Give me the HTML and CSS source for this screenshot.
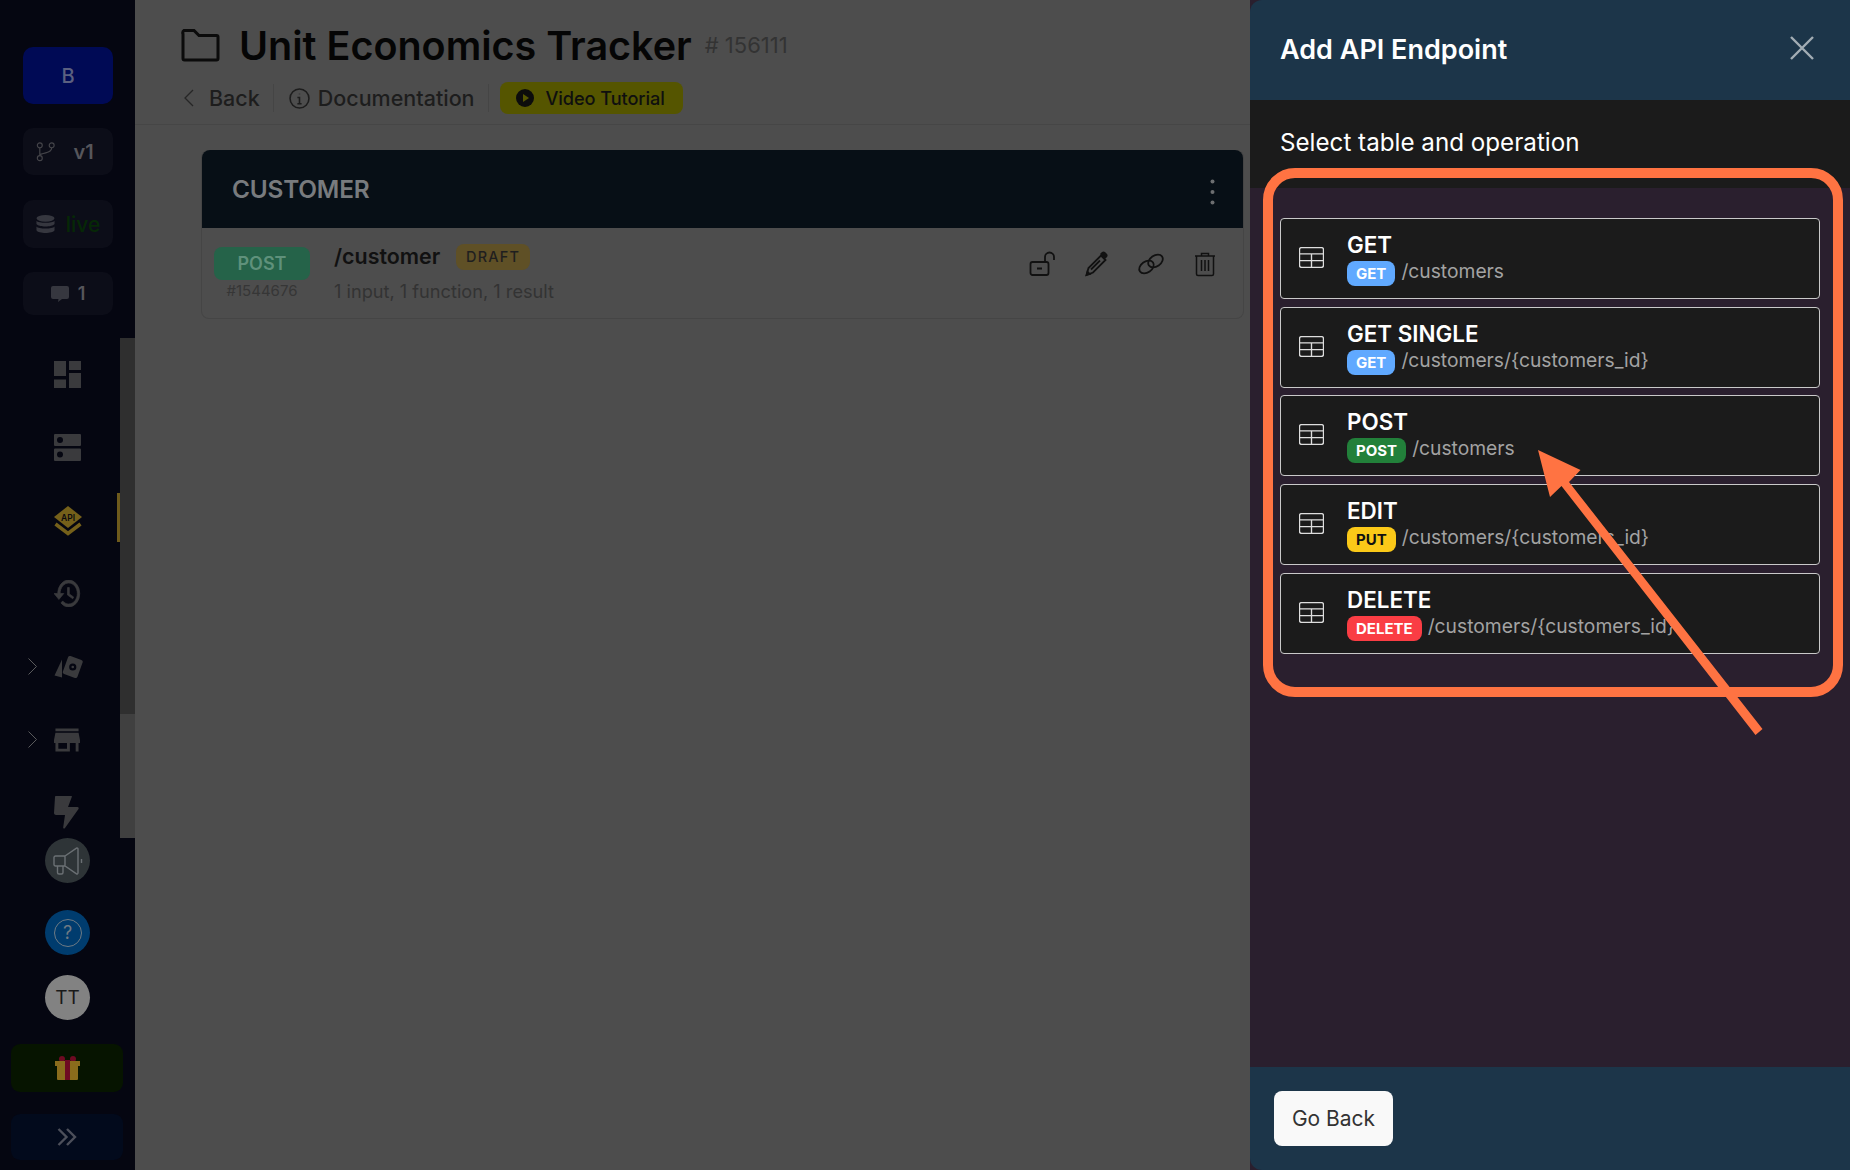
FILE: index.html
```html
<!DOCTYPE html>
<html lang="en">
<head>
<meta charset="utf-8">
<title>Unit Economics Tracker</title>
<link rel="stylesheet" href="styles.css">
</head>
<body>
<div class="app">
  <aside class="sidebar">
    <div class="top-stack">
      <div class="chip chip-brand">B</div>
      <div class="chip chip-branch">
        <svg class="ic-branch" viewBox="0 0 20 20"><circle cx="4" cy="3.500" r="2.600"/><circle cx="4" cy="17" r="2.600"/><circle cx="16.500" cy="3.500" r="2.600"/><path d="M4 6v8.500M16.500 6c0 4-4 5-12 7"/></svg>
        <span>v1</span>
      </div>
      <div class="chip chip-live">
        <svg class="ic-db" viewBox="0 0 20 20"><ellipse cx="10" cy="3.500" rx="9.500" ry="3.500"/><path d="M.5 6c2 3 17 3 19 0v3.500c-2 3.500-17 3.500-19 0zM.5 12c2 3 17 3 19 0v4c-2 3.800-17 3.800-19 0z"/></svg>
        <span>live</span>
      </div>
      <div class="chip chip-comment">
        <svg class="ic-comment" viewBox="0 0 18 16"><path d="M2 0h14a2 2 0 0 1 2 2v9a2 2 0 0 1-2 2H11l-4 3 .5-3H2a2 2 0 0 1-2-2V2a2 2 0 0 1 2-2z"/></svg>
        <span>1</span>
      </div>
    </div>
    <div class="nav-wrap">
      <nav class="nav">
        <div class="nav-row">
          <span></span>
          <svg class="nav-ic ic-27" viewBox="0 0 27 27"><path d="M0 0h12v15H0zM15 0h12v9H15zM0 18.500h12V27H0zM15 12h12v15H15z"/></svg>
        </div>
        <div class="nav-row">
          <span></span>
          <svg class="nav-ic ic-27" viewBox="0 0 27 27"><path fill-rule="evenodd" d="M1 0h25a1 1 0 0 1 1 1v10a1 1 0 0 1-1 1H1a1 1 0 0 1-1-1V1a1 1 0 0 1 1-1zm5 3a3 3 0 1 0 0 6 3 3 0 0 0 0-6zM1 14.500h25a1 1 0 0 1 1 1V26a1 1 0 0 1-1 1H1a1 1 0 0 1-1-1V15.500a1 1 0 0 1 1-1zm5 3a3 3 0 1 0 0 6 3 3 0 0 0 0-6z"/></svg>
        </div>
        <div class="nav-row nav-row-active">
          <span></span>
          <svg class="nav-ic ic-api" viewBox="0 0 28 30"><path class="gold" d="M14 0l14 11-14 11L0 11z"/><path class="gold-line" d="M1.500 18L14 27.500 26.500 18"/><text class="api-label" x="14" y="14.500" text-anchor="middle">API</text></svg>
          <i class="nav-marker"></i>
        </div>
        <div class="nav-row">
          <span></span>
          <svg class="nav-ic ic-27 ic-history" viewBox="1 3 22 18" preserveAspectRatio="none"><path d="M13 3a9 9 0 0 0-9 9H1l3.890 3.890.07.14L9 12H6c0-3.870 3.130-7 7-7s7 3.130 7 7-3.130 7-7 7c-1.930 0-3.680-.79-4.940-2.060l-1.420 1.420A8.954 8.954 0 0 0 13 21a9 9 0 0 0 0-18zm-1 5v5l4.280 2.540.72-1.210-3.500-2.080V8H12z"/></svg>
        </div>
        <div class="nav-row">
          <svg class="chev" viewBox="0 0 9 17"><path d="M.5.5l8 8-8 8"/></svg>
          <svg class="nav-ic ic-cards" viewBox="0 0 29 26"><rect x="11" y="3.500" width="15.500" height="19" rx="2" transform="rotate(20 18.750 13)"/><path d="M8 5.500L.5 21.500l7.500 2z"/><circle class="gear" cx="18.750" cy="13" r="3.600"/><circle cx="18.750" cy="13" r="1.300"/></svg>
        </div>
        <div class="nav-row">
          <svg class="chev" viewBox="0 0 9 17"><path d="M.5.5l8 8-8 8"/></svg>
          <svg class="nav-ic ic-store" viewBox="3 4 18 16"><path d="M20 4H4v2h16V4zm1 10v-2l-1-5H4l-1 5v2h1v6h10v-6h4v6h2v-6h1zm-9 4H6v-4h6v4z"/></svg>
        </div>
        <div class="nav-row">
          <span></span>
          <svg class="nav-ic ic-bolt" viewBox="0 0 25 33"><path d="M2 0h15c1 0 1 .5.8 1L14 11h9.500c1.200 0 1.500 1 1 2L11 32c-.8 1-2 .5-1.800-.8L11 19H2c-1 0-2-.8-2-2L1 1c0-.6.5-1 1-1z"/></svg>
        </div>
      </nav>
      <div class="scrollbar"><div class="scroll-thumb"></div></div>
    </div>
    <div class="bottom-stack">
      <div class="round round-news">
        <svg class="ic-mega" viewBox="0 0 30 28"><path d="M12 9L23.500 1.200A1 1 0 0 1 25 2v24a1 1 0 0 1-1.500.8L12 19H2.500A1.500 1.500 0 0 1 1 17.500v-7A1.500 1.500 0 0 1 2.500 9zM12 9v10M4.500 19v6.500A1.500 1.500 0 0 0 6 27h2.500a1.500 1.500 0 0 0 1.500-1.500V19M28.500 12v4"/></svg>
      </div>
      <div class="round round-help"><span class="help-ring">?</span></div>
      <div class="round round-user">TT</div>
      <div class="wide-btn wide-gift">
        <svg class="ic-gift" viewBox="0 0 25 24"><circle class="ribbon" cx="7" cy="3" r="3"/><circle class="ribbon" cx="18" cy="3" r="3"/><path class="box" d="M0 5h25v5H0zM2 10h21v13a1 1 0 0 1-1 1H3a1 1 0 0 1-1-1z"/><path class="ribbon" d="M10 4h5v20h-5z"/></svg>
      </div>
      <div class="wide-btn wide-expand">
        <svg class="ic-expand" viewBox="0 0 20 18"><path d="M1.500 1l8 8-8 8M10 1l8 8-8 8"/></svg>
      </div>
    </div>
  </aside>

  <main class="main">
    <header class="page-head">
      <div class="title-row">
        <svg class="ic-folder" viewBox="0 0 39 34"><path d="M2 6a3 3 0 0 1 1-3.500h10l5 5h17.500a1.500 1.500 0 0 1 1.500 1.500v21.500a1.500 1.500 0 0 1-1.500 1.500h-32A1.500 1.500 0 0 1 2 30.500z"/></svg>
        <h1 class="page-title">Unit Economics Tracker</h1>
        <span class="page-id"># 156111</span>
      </div>
      <div class="sub-row">
        <a class="sub-link sub-back">
          <svg class="ic-back" viewBox="0 0 10 18"><path d="M9 1L1 9l8 8"/></svg>
          Back
        </a>
        <i class="sub-divider"></i>
        <a class="sub-link sub-doc">
          <svg class="ic-info" viewBox="0 0 20 20"><circle cx="10" cy="10" r="9"/><path d="M8 9h2v6M8 15h4M10 5.500v.5"/></svg>
          Documentation
        </a>
        <i class="sub-divider"></i>
        <a class="video-btn">
          <svg class="ic-play" viewBox="0 0 18 18"><circle cx="9" cy="9" r="9"/><path class="play-tri" d="M7 5l6 4-6 4z"/></svg>
          Video Tutorial
        </a>
      </div>
    </header>
    <section class="content">
      <div class="card">
        <div class="card-head">
          <span class="card-title">CUSTOMER</span>
          <svg class="ic-dots" viewBox="0 0 5 26"><circle cx="2.500" cy="2.500" r="2"/><circle cx="2.500" cy="13" r="2"/><circle cx="2.500" cy="23.500" r="2"/></svg>
        </div>
        <div class="card-row">
          <div class="verb-col">
            <span class="verb-post">POST</span>
            <span class="verb-id">#1544676</span>
          </div>
          <div class="row-info">
            <div class="row-title"><span class="row-path">/customer</span><span class="draft">DRAFT</span></div>
            <div class="row-desc">1 input, 1 function, 1 result</div>
          </div>
          <div class="row-actions">
            <svg class="act" viewBox="0 0 28 28"><rect x="2.500" y="12" width="18" height="13" rx="2"/><path d="M9 18.500h5M17 12V7a4.500 4.500 0 0 1 9 0v3"/></svg>
            <svg class="act" viewBox="0 0 28 28"><path d="M4.500 25l2-7L19 5.500l4.500 4.500L11 22.500z"/><path class="act-fill" d="M18 4l2-2c1-.8 2-.8 3 0l2 2c.8 1 .8 2 0 3l-2 2zM3.500 26l1.500-6 4.500 4.500z"/><path d="M9 19.500l9-9"/></svg>
            <svg class="act" viewBox="0 0 28 28"><ellipse cx="9.500" cy="17" rx="8" ry="5.500" transform="rotate(-35 9.500 17)"/><ellipse cx="18.500" cy="11" rx="8" ry="5.500" transform="rotate(-35 18.500 11)"/></svg>
            <svg class="act act-thin" viewBox="0 0 28 28"><path d="M4 6h20M10.500 6V3.500h7V6M5.500 6v18a1.500 1.500 0 0 0 1.500 1.500h14a1.500 1.500 0 0 0 1.500-1.500V6M10.500 10v11M14 10v11M17.500 10v11"/></svg>
          </div>
        </div>
      </div>
    </section>
  </main>

  <aside class="panel">
    <header class="panel-head">
      <h2 class="panel-title">Add API Endpoint</h2>
      <svg class="ic-close" viewBox="0 0 24 24"><path d="M1 1l22 22M23 1L1 23"/></svg>
    </header>
    <div class="panel-intro">Select table and operation</div>
    <div class="panel-body">
      <div class="op-list">
        <div class="op">
          <svg class="ic-table" viewBox="0 0 24 20"><rect x=".5" y=".5" width="23" height="19" rx="2"/><path d="M.5 6.500h23M.5 13h23M12 6.500v13"/></svg>
          <div class="op-text"><div class="op-title">GET</div><div class="op-route"><span class="tag tag-get">GET</span><span class="op-path">/customers</span></div></div>
        </div>
        <div class="op">
          <svg class="ic-table" viewBox="0 0 24 20"><rect x=".5" y=".5" width="23" height="19" rx="2"/><path d="M.5 6.500h23M.5 13h23M12 6.500v13"/></svg>
          <div class="op-text"><div class="op-title">GET SINGLE</div><div class="op-route"><span class="tag tag-get">GET</span><span class="op-path">/customers/{customers_id}</span></div></div>
        </div>
        <div class="op">
          <svg class="ic-table" viewBox="0 0 24 20"><rect x=".5" y=".5" width="23" height="19" rx="2"/><path d="M.5 6.500h23M.5 13h23M12 6.500v13"/></svg>
          <div class="op-text"><div class="op-title">POST</div><div class="op-route"><span class="tag tag-post">POST</span><span class="op-path">/customers</span></div></div>
        </div>
        <div class="op">
          <svg class="ic-table" viewBox="0 0 24 20"><rect x=".5" y=".5" width="23" height="19" rx="2"/><path d="M.5 6.500h23M.5 13h23M12 6.500v13"/></svg>
          <div class="op-text"><div class="op-title">EDIT</div><div class="op-route"><span class="tag tag-put">PUT</span><span class="op-path">/customers/{customers_id}</span></div></div>
        </div>
        <div class="op">
          <svg class="ic-table" viewBox="0 0 24 20"><rect x=".5" y=".5" width="23" height="19" rx="2"/><path d="M.5 6.500h23M.5 13h23M12 6.500v13"/></svg>
          <div class="op-text"><div class="op-title">DELETE</div><div class="op-route"><span class="tag tag-delete">DELETE</span><span class="op-path">/customers/{customers_id}</span></div></div>
        </div>
      </div>
    </div>
    <footer class="panel-foot"><button class="go-back">Go Back</button></footer>
    <div class="mark-box"></div>
    <svg class="mark-arrow" viewBox="0 0 600 1170"><path d="M288 450l42.500 20-11.500 12 193.500 247-7 6-194-249-11.500 11z"/></svg>
  </aside>
</div>
</body>
</html>
```
FILE: styles.css
```css
* { box-sizing: border-box; }
html, body { margin: 0; height: 100%; }
body { font-family: Inter, "Liberation Sans", sans-serif; background: #4d4d4d; overflow: hidden; }
svg { display: block; }
h1, h2 { margin: 0; }

.app { display: flex; width: 1850px; height: 1170px; }

/* sidebar */
.sidebar { width: 135px; flex: none; background: #050611; display: flex; flex-direction: column; }
.top-stack { padding: 47px 22px 0 23px; display: flex; flex-direction: column; }
.chip { height: 47px; border-radius: 10px; background: #0c0d18; display: flex; align-items: center; justify-content: center; font-weight: 600; font-size: 20px; }
.chip-brand { height: 57px; background: #000a55; color: #5b6080; font-weight: 500; margin-bottom: 24px; }
.chip-branch { color: #56565b; margin-bottom: 25px; padding-right: 6px; gap: 18px; }
.chip-live { height: 48px; color: #062806; margin-bottom: 24px; font-weight: 500; font-size: 21px; gap: 11px; }
.chip-comment { height: 43px; color: #56565b; gap: 9px; font-size: 18px; }
.ic-branch { width: 19px; height: 21px; fill: none; stroke: #45454a; stroke-width: 1.200; }
.ic-db { width: 19px; height: 21px; fill: #36373f; }
.ic-comment { width: 18px; height: 16px; fill: #36373f; }

.nav-wrap { margin-top: 23px; height: 500px; display: flex; overflow: hidden; }
.nav { width: 120px; flex: none; }
.nav-row { position: relative; height: 73px; display: grid; grid-template-columns: 54px 66px; align-items: center; }
.nav-ic { fill: #3a3a3d; }
.ic-27 { width: 27px; height: 27px; }
.ic-history { stroke: #3a3a3d; stroke-width: .5; }
.ic-cards { width: 29px; height: 26px; }
.ic-store { width: 26px; height: 24px; }
.ic-bolt { width: 25px; height: 33px; }
.ic-api { width: 28px; height: 30px; }
.gold { fill: #75601a; }
.gold-line { fill: none; stroke: #75601a; stroke-width: 3.500; }
.api-label { font: 600 8.500px Inter, "Liberation Sans", sans-serif; fill: #0d0b0e; }
.gear { fill: #050611; }
.chev { width: 9px; height: 17px; fill: none; stroke: #5a5a5c; stroke-width: 1; justify-self: end; margin-right: 17px; }
.nav-marker { position: absolute; left: 117px; top: 9px; width: 3px; height: 49px; background: #6e5a1c; }
.scrollbar { width: 15px; background: #2f2f2f; position: relative; }
.scroll-thumb { position: absolute; left: 0; right: 0; bottom: 0; height: 124px; background: #404040; }

.bottom-stack { display: flex; flex-direction: column; align-items: center; }
.round { width: 45px; height: 45px; border-radius: 50%; display: flex; align-items: center; justify-content: center; }
.round-news { background: #2e3437; }
.round-help { background: #003c6e; margin-top: 27px; }
.round-user { background: #828282; margin-top: 20px; color: #1a1a1a; font-size: 19px; }
.ic-mega { width: 30px; height: 28px; fill: none; stroke: #6b7074; stroke-width: 1.400; }
.help-ring { width: 28px; height: 28px; border-radius: 50%; border: 1.500px solid #6e7a84; color: #6e7a84; font-size: 18px; line-height: 25px; text-align: center; }
.wide-btn { width: 112px; border-radius: 9px; display: flex; align-items: center; justify-content: center; margin-right: 1px; }
.wide-gift { height: 48px; background: #061400; margin-top: 24px; }
.wide-expand { height: 46px; background: #020a1c; margin-top: 22px; }
.ic-gift { width: 25px; height: 26px; }
.ribbon { fill: #6e0a22; }
.box { fill: #8a6c1c; }
.ic-expand { width: 20px; height: 18px; fill: none; stroke: #4c4f5a; stroke-width: 2.400; }

/* main */
.main { width: 1115px; flex: none; background: #4d4d4d; display: flex; flex-direction: column; }
.page-head { height: 125px; padding: 22px 0 0 46px; border-bottom: 1px solid #464646; }
.title-row { display: flex; align-items: center; height: 46px; }
.ic-folder { width: 39px; height: 34px; fill: none; stroke: #0b0b0b; stroke-width: 3; }
.page-title { margin-left: 19px; font-size: 39.500px; font-weight: 600; color: #050505; line-height: 48px; white-space: nowrap; margin-top: 1px; }
.page-id { margin-left: 13px; font-size: 22px; color: #333; }
.sub-row { margin-top: 14px; height: 32px; display: flex; align-items: center; font-size: 21.500px; font-weight: 500; color: #1d1d1d; }
.sub-link { display: flex; align-items: center; }
.sub-back { gap: 15px; padding-left: 3px; }
.sub-doc { gap: 8px; }
.ic-back { width: 10px; height: 18px; fill: none; stroke: #262626; stroke-width: 1.300; }
.ic-info { width: 21px; height: 21px; fill: none; stroke: #1d1d1d; stroke-width: 1.500; }
.sub-divider { width: 1px; height: 28px; background: #454545; }
.sub-back + .sub-divider { margin: 0 15px 0 13px; }
.sub-doc + .sub-divider { margin: 0 11px 0 13px; }
.video-btn { height: 32px; width: 183px; background: #555500; border-radius: 8px; display: flex; align-items: center; gap: 12px; padding-left: 16px; font-size: 18.200px; font-weight: 500; letter-spacing: -.1px; color: #0f0f0f; }
.ic-play { width: 18px; height: 18px; fill: #0c0c0c; }
.play-tri { fill: #555500; }

.content { padding: 25px 6px 0 66px; }
.card { border: 1px solid #454545; border-top: 0; border-radius: 8px; height: 169px; }
.card-head { height: 78px; background: #070f16; border-radius: 8px 8px 0 0; display: flex; align-items: center; justify-content: space-between; padding: 0 28px 0 30px; }
.card-title { font-size: 24.400px; font-weight: 600; color: #787b7e; letter-spacing: -.2px; }
.ic-dots { width: 5px; height: 26px; fill: #6c6e70; margin-top: 5px; }
.card-row { display: flex; align-items: flex-start; height: 90px; padding: 17px 24px 0 12px; }
.verb-col { width: 96px; flex: none; display: flex; flex-direction: column; align-items: center; padding-top: 2px; }
.verb-post { width: 96px; height: 33px; border-radius: 8px; background: #256349; color: #5f917b; font-size: 18px; font-weight: 600; line-height: 33px; text-align: center; }
.verb-id { margin-top: 2px; font-size: 15px; line-height: 18px; color: #363636; }
.row-info { margin-left: 24px; }
.row-title { display: flex; align-items: center; height: 26px; margin-top: -2px; }
.row-path { font-size: 21.400px; font-weight: 600; color: #111; }
.draft { margin-left: 16px; margin-top: 2px; height: 26px; width: 74px; border-radius: 8px; background: #5f5026; color: #1f1f1f; font-size: 14.500px; font-weight: 500; letter-spacing: 1.200px; line-height: 26px; text-align: center; }
.row-desc { margin-top: 10px; font-size: 18.200px; line-height: 24px; color: #333; }
.row-actions { margin-left: auto; display: flex; gap: 26.500px; margin-top: 5px; }
.act { width: 28px; height: 28px; fill: none; stroke: #111; stroke-width: 1.800; }
.act-thin { stroke-width: 1.500; }
.act-fill { fill: #111; stroke: none; }

/* panel */
.panel { position: relative; width: 600px; flex: none; background: #2a1f2e; display: flex; flex-direction: column; }
.panel-head { height: 100px; background: #1c3549; border-top-left-radius: 12px; display: flex; align-items: center; justify-content: space-between; padding: 0 36px 0 30px; flex: none; }
.panel-title { font-size: 27px; font-weight: 600; color: #fff; margin-top: -2px; }
.ic-close { width: 24px; height: 24px; fill: none; stroke: #a2adb4; stroke-width: 2.400; margin-top: -4px; }
.panel-intro { height: 88px; background: #1b1b1b; padding: 28px 30px 0; font-size: 24.200px; line-height: 30px; color: #fff; flex: none; }
.panel-body { flex: 1; padding: 30px 30px 0; }
.op-list { display: flex; flex-direction: column; gap: 7.700px; }
.op { height: 81px; border: 1px solid #c9c9c9; border-radius: 4px; background: #1b1b1b; display: flex; align-items: center; padding-left: 18px; gap: 23px; }
.ic-table { width: 25px; height: 21px; fill: none; stroke: #dedede; stroke-width: 1.300; flex: none; margin-top: -2px; }
.op-title { font-size: 22.400px; font-weight: 600; line-height: 28px; color: #fff; }
.op-route { margin-top: 2px; display: flex; align-items: center; gap: 6px; }
.tag { height: 25px; border-radius: 8px; padding: 0 9px; font-size: 15px; font-weight: 700; line-height: 25px; color: #fff; }
.tag-get { background: #60a9ff; }
.tag-post { background: #22803a; }
.tag-put { background: #fbc918; color: #111; }
.tag-delete { background: #fa3d44; }
.op-path { font-size: 19.250px; color: #a3a3a3; line-height: 24px; margin-top: -5px; }
.panel-foot { height: 103px; background: #1c3549; border-bottom-left-radius: 12px; padding: 24px 0 0 24px; flex: none; }
.go-back { width: 119px; height: 55px; border: 0; border-radius: 8px; background: #f9f9f9; font: 400 21px Inter, "Liberation Sans", sans-serif; color: #333; padding: 0; }
.mark-box { position: absolute; left: 12.500px; top: 167.500px; width: 580px; height: 529px; border: 10px solid #ff7342; border-radius: 32px; }
.mark-arrow { position: absolute; inset: 0; width: 100%; height: 100%; fill: #ff7342; pointer-events: none; }
```
